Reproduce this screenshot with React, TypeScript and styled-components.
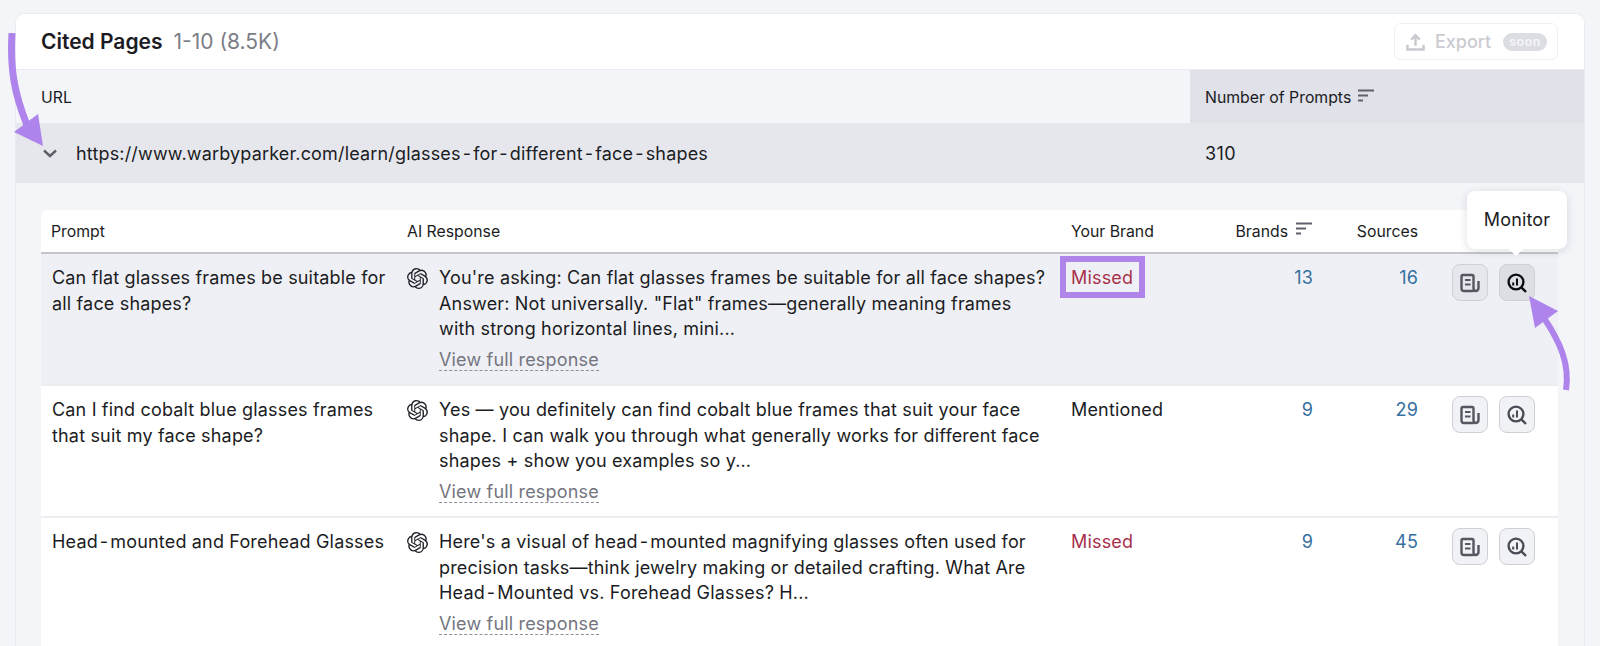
import React from 'react'
import styled, { createGlobalStyle } from 'styled-components'
import { SiOpenai } from 'react-icons/si'

const GlobalStyle = createGlobalStyle`
    html, body {
        margin: 0;
        height: 646px;
        overflow: hidden;
        background: #F4F5F9;
        font-family: Inter, "Liberation Sans", sans-serif;
        color: #1B1C23;
    }
`

type Row = {
    prompt: string
    lines: string[]
    brand: 'Missed' | 'Mentioned'
    brands: number
    sources: number
    active?: boolean
}

const rows: Row[] = [
    {
        prompt: 'Can flat glasses frames be suitable for all face shapes?',
        lines: [
            "You're asking: Can flat glasses frames be suitable for all face shapes?",
            'Answer: Not universally. "Flat" frames—generally meaning frames',
            'with strong horizontal lines, mini...',
        ],
        brand: 'Missed',
        brands: 13,
        sources: 16,
        active: true,
    },
    {
        prompt: 'Can I find cobalt blue glasses frames that suit my face shape?',
        lines: [
            'Yes — you definitely can find cobalt blue frames that suit your face',
            'shape. I can walk you through what generally works for different face',
            'shapes + show you examples so y...',
        ],
        brand: 'Mentioned',
        brands: 9,
        sources: 29,
    },
    {
        prompt: 'Head-mounted and Forehead Glasses',
        lines: [
            "Here's a visual of head-mounted magnifying glasses often used for",
            'precision tasks—think jewelry making or detailed crafting. What Are',
            'Head-Mounted vs. Forehead Glasses? H...',
        ],
        brand: 'Missed',
        brands: 9,
        sources: 45,
    },
]

// the hyphens in this ui sit wider than Inter's own
function spaced(text: string) {
    return text.split('-').map((part, i) => (
        <React.Fragment key={i}>
            {i > 0 && <Hyphen>-</Hyphen>}
            {part}
        </React.Fragment>
    ))
}

function SortIcon() {
    return (
        <svg width="17" height="14" viewBox="0 0 17 14" fill="none" stroke="#5F606A" strokeWidth="2.2">
            <path d="M0 1.5h16M0 6.5h10M0 11.5h5" />
        </svg>
    )
}

function ChevronIcon() {
    return (
        <svg width="14" height="9" viewBox="0 0 14 9" fill="none" stroke="#5F606A" strokeWidth="2.4">
            <path d="M1 1.5l6 5.5 6-5.5" />
        </svg>
    )
}

function UploadIcon() {
    return (
        <svg width="20" height="20" viewBox="0 0 20 20" fill="none" stroke="#C9CAD0" strokeWidth="2.6">
            <path d="M10 14V3M5.5 7.5L10 3l4.5 4.5" />
            <path d="M1.5 13v5h17v-5" />
        </svg>
    )
}

function ReportIcon() {
    return (
        <svg width="20" height="20" viewBox="0 0 20 20" fill="none" stroke="#55565F" strokeWidth="2.4">
            <path d="M13.5 18H4a2.5 2.5 0 0 1-2.5-2.5V3.5A1.5 1.5 0 0 1 3 2h9a1.5 1.5 0 0 1 1.5 1.5V15c0 2 1 3 2.2 3s2.8-1 2.8-3V8" />
            <path d="M5 7h5.5M5 11.5h5.5" strokeWidth="2" />
        </svg>
    )
}

function MonitorIcon({ dark }: { dark?: boolean }) {
    const color = dark ? '#0B0C12' : '#4A4B54'
    return (
        <svg width="22" height="22" viewBox="0 0 22 22" fill="none" stroke={color} strokeWidth="2.4">
            <circle cx="10" cy="10" r="7.4" />
            <path d="M15.6 15.6l4.4 4.4" strokeWidth="2.4" />
            <path d="M7.2 10.5v3M11 6.5v7" strokeWidth="2" />
        </svg>
    )
}

export default function App() {
    return (
        <>
            <GlobalStyle />
            <Card>
                <CardHeader>
                    <TitleBlock>
                        <Title>Cited Pages</Title>
                        <Count>1-10 (8.5K)</Count>
                    </TitleBlock>
                    <ExportButton>
                        <UploadIcon />
                        <span>Export</span>
                        <SoonBadge>soon</SoonBadge>
                    </ExportButton>
                </CardHeader>

                <OuterHead>
                    <UrlHeadCell>URL</UrlHeadCell>
                    <PromptsHeadCell>
                        Number of Prompts
                        <SortIcon />
                    </PromptsHeadCell>
                </OuterHead>

                <UrlRow>
                    <UrlCell>
                        <ChevronIcon />
                        <span>{spaced('https://www.warbyparker.com/learn/glasses-for-different-face-shapes')}</span>
                    </UrlCell>
                    <PromptCountCell>310</PromptCountCell>
                </UrlRow>

                <Expanded>
                    <InnerTable>
                        <InnerHead>
                            <HeadCell>Prompt</HeadCell>
                            <HeadCell>AI Response</HeadCell>
                            <HeadCell>Your Brand</HeadCell>
                            <HeadCell $right>
                                Brands
                                <SortIcon />
                            </HeadCell>
                            <HeadCell $right>Sources</HeadCell>
                            <HeadCell />
                        </InnerHead>

                        {rows.map((row) => (
                            <BodyRow key={row.prompt} $active={row.active}>
                                <PromptCell>{spaced(row.prompt)}</PromptCell>
                                <ResponseCell>
                                    <LogoBox>
                                        <SiOpenai size={21} />
                                    </LogoBox>
                                    <div>
                                        {row.lines.map((line) => (
                                            <ResponseLine key={line}>{spaced(line)}</ResponseLine>
                                        ))}
                                        <FullResponse>View full response</FullResponse>
                                    </div>
                                </ResponseCell>
                                <BrandCell $missed={row.brand === 'Missed'}>
                                    {row.brand}
                                    {row.active && <Highlight />}
                                </BrandCell>
                                <NumberCell>{row.brands}</NumberCell>
                                <NumberCell>{row.sources}</NumberCell>
                                <ActionsCell>
                                    <ActionButton $active={row.active}>
                                        <ReportIcon />
                                    </ActionButton>
                                    <ActionButton $active={row.active} $hover={row.active}>
                                        <MonitorIcon dark={row.active} />
                                        {row.active && <Tooltip>Monitor</Tooltip>}
                                    </ActionButton>
                                </ActionsCell>
                            </BodyRow>
                        ))}
                    </InnerTable>
                </Expanded>
            </Card>

            <LeftArrow width="50" height="125" viewBox="0 0 50 125">
                <path d="M7 0C5 35 9 60 22 92" fill="none" stroke="#AE84EC" strokeWidth="7" />
                <path d="M38 113L9 99L33 81Z" fill="#AE84EC" />
            </LeftArrow>
            <RightArrow width="50" height="100" viewBox="0 0 50 100">
                <path d="M38 96C42 70 32 48 16 24" fill="none" stroke="#AE84EC" strokeWidth="6" />
                <path d="M1 2L30 17L7 34Z" fill="#AE84EC" />
            </RightArrow>
        </>
    )
}

const Hyphen = styled.span`
    margin: 0 2px;
`

const Card = styled.div`
    margin: 13px 15px 0;
    background: #F4F5F9;
    border: 1px solid #ECEDF2;
    border-bottom: none;
    border-radius: 10px 10px 0 0;
    height: 640px;
    overflow: hidden;
`

const CardHeader = styled.div`
    display: flex;
    align-items: center;
    justify-content: space-between;
    box-sizing: border-box;
    height: 56px;
    padding: 0 26px 0 25px;
    background: #FFFFFF;
    border-bottom: 1px solid #EBECF1;
`

const TitleBlock = styled.div`
    display: flex;
    align-items: baseline;
    gap: 11px;
`

const Title = styled.div`
    font-weight: 600;
    font-size: 21px;
`

const Count = styled.div`
    font-size: 21px;
    color: #7C7D86;
`

const ExportButton = styled.div`
    display: flex;
    align-items: center;
    box-sizing: border-box;
    width: 164px;
    height: 37px;
    padding: 0 10px 0 11px;
    gap: 10px;
    border: 1px solid #EFEFF3;
    border-radius: 7px;
    font-size: 18px;
    font-weight: 500;
    color: #CBCCD2;
`

const SoonBadge = styled.span`
    margin-left: 2px;
    padding: 1px 6px;
    border-radius: 9px;
    background: #DCDDE2;
    color: #F5F5F8;
    font-size: 12.5px;
    line-height: 16px;
    font-weight: 600;
    letter-spacing: 0.5px;
`

const OuterHead = styled.div`
    display: grid;
    grid-template-columns: 1174px 1fr;
    height: 53px;
    font-size: 15.8px;
`

const UrlHeadCell = styled.div`
    display: flex;
    align-items: center;
    padding: 2px 0 0 25px;
`

const PromptsHeadCell = styled.div`
    display: flex;
    align-items: center;
    gap: 7px;
    padding: 2px 0 0 15px;
    background: #E0E1E9;

    svg {
        margin-top: -4px;
    }
`

const UrlRow = styled.div`
    display: grid;
    grid-template-columns: 1174px 1fr;
    height: 60px;
    background: #E6E7ED;
    font-size: 18px;
    letter-spacing: 0.17px;
`

const UrlCell = styled.div`
    display: flex;
    align-items: center;
    gap: 19px;
    padding-left: 27px;
`

const PromptCountCell = styled.div`
    display: flex;
    align-items: center;
    padding-left: 15px;
    letter-spacing: 0.45px;
`

const Expanded = styled.div`
    padding: 27px 26px 0 25px;
`

const InnerTable = styled.div`
    background: #FFFFFF;
    border-radius: 6px 6px 0 0;
`

const columns = '356px 664px 129px 133px 105px 130px'

const InnerHead = styled.div`
    display: grid;
    grid-template-columns: ${columns};
    height: 42px;
    border-bottom: 2px solid #C5C6CC;
    border-radius: 6px 6px 0 0;
    font-size: 15.8px;
`

const HeadCell = styled.div<{ $right?: boolean }>`
    display: flex;
    align-items: center;
    justify-content: ${(p) => (p.$right ? 'flex-end' : 'flex-start')};
    gap: 8px;
    padding: 0 10px;

    svg {
        margin-top: -4px;
    }
`

const BodyRow = styled.div<{ $active?: boolean }>`
    display: grid;
    grid-template-columns: ${columns};
    height: 130px;
    border-bottom: 2px solid #ECEDF1;
    background: ${(p) => (p.$active ? '#EFF0F5' : '#FFFFFF')};
    font-size: 18px;
    letter-spacing: 0.17px;
    line-height: 25.7px;
`

const PromptCell = styled.div`
    padding: 11px 10px 0 11px;
`

const ResponseCell = styled.div`
    display: flex;
    gap: 11px;
    padding: 11px 0 0 10px;
`

const LogoBox = styled.div`
    flex: none;
    display: flex;
    height: 26px;
    align-items: center;
    color: #22232B;
`

const ResponseLine = styled.div`
    white-space: nowrap;
`

const FullResponse = styled.span`
    display: inline-block;
    margin-top: 8px;
    line-height: 20px;
    color: #74757F;
    border-bottom: 1px dashed #8E8F98;
`

const BrandCell = styled.div<{ $missed?: boolean }>`
    position: relative;
    align-self: start;
    margin-top: 11px;
    padding-left: 10px;
    color: ${(p) => (p.$missed ? '#A8304C' : '#1B1C23')};
`

const Highlight = styled.div`
    position: absolute;
    left: -1px;
    top: -9px;
    width: 85px;
    height: 42px;
    box-sizing: border-box;
    border: 6px solid #B085EA;
`

const NumberCell = styled.div`
    padding: 11px 10px 0 0;
    text-align: right;
    color: #34709F;
`

const ActionsCell = styled.div`
    display: flex;
    gap: 11px;
    padding: 10px 0 0 24px;
`

const ActionButton = styled.div<{ $hover?: boolean; $active?: boolean }>`
    position: relative;
    display: flex;
    align-items: center;
    justify-content: center;
    box-sizing: border-box;
    width: 36px;
    height: 37px;
    border: 1px solid #CFD0D7;
    border-radius: 8px;
    background: ${(p) => (p.$hover ? '#DDDEE4' : p.$active ? '#E6E7EC' : '#F1F2F6')};
`

const Tooltip = styled.div`
    position: absolute;
    left: -33px;
    bottom: 51px;
    width: 100px;
    height: 58px;
    display: flex;
    align-items: center;
    justify-content: center;
    background: #FFFFFF;
    border-radius: 8px;
    box-shadow: 0 2px 10px rgba(30, 32, 50, 0.14);
    font-size: 18px;
    color: #1B1C23;

    &::after {
        content: '';
        position: absolute;
        left: 44px;
        bottom: -5px;
        width: 10px;
        height: 10px;
        background: #FFFFFF;
        transform: rotate(45deg);
    }
`

const LeftArrow = styled.svg`
    position: absolute;
    left: 5px;
    top: 33px;
`

const RightArrow = styled.svg`
    position: absolute;
    left: 1528px;
    top: 294px;
`
